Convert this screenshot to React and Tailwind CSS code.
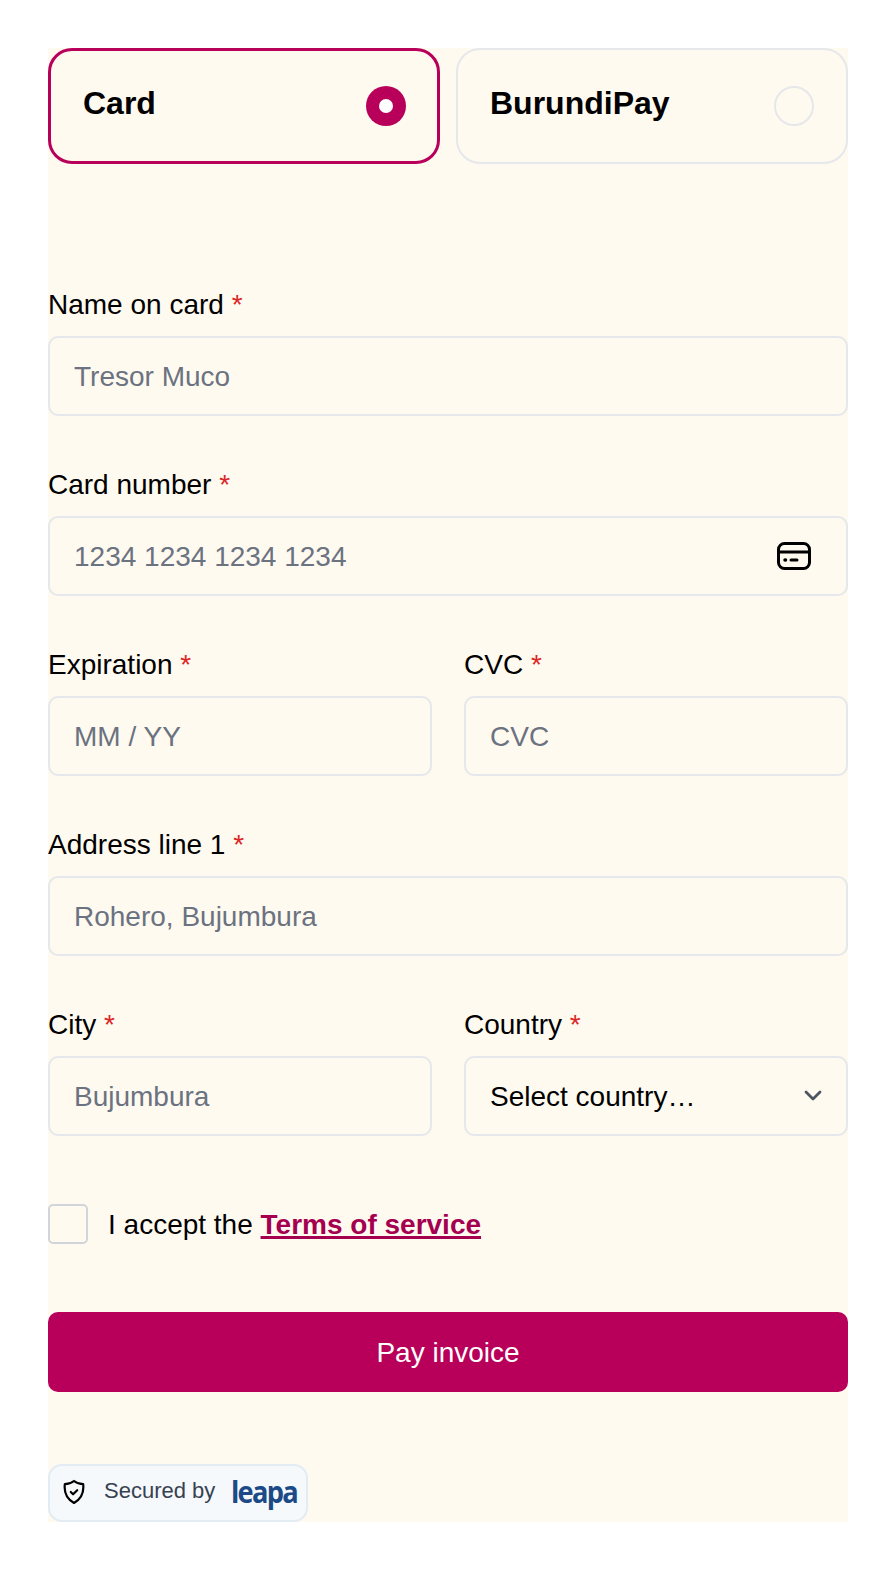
import React from 'react';

const Field = ({ label, placeholder, children }) => (
  <div className="flex flex-col min-w-0">
    <label className="text-[28px] leading-[32px] text-black mb-[15px]">
      {label} <span className="text-[#dc2626]">*</span>
    </label>
    {children || (
      <input
        placeholder={placeholder}
        className="w-full h-[80px] px-[24px] pt-[2px] bg-transparent border-2 border-[#e5e7eb] rounded-[10px] text-[28px] text-black placeholder:text-[#6b7280] outline-none"
      />
    )}
  </div>
);

const PayTab = ({ label, selected }) => (
  <div
    className={
      selected
        ? 'h-[116px] flex justify-between items-center pl-[32px] pr-[31px] border-[3.5px] border-[#b8005a] rounded-[24px]'
        : 'h-[116px] flex justify-between items-center pl-[32px] pr-[32px] border-2 border-[#e5e7eb] rounded-[24px]'
    }
  >
    <span className="text-[32px] font-bold text-black -mt-[7px]">{label}</span>
    {selected ? (
      <span className="w-[40px] h-[40px] rounded-full bg-[#b8005a] flex items-center justify-center">
        <span className="w-[14px] h-[14px] rounded-full bg-white" />
      </span>
    ) : (
      <span className="w-[40px] h-[40px] rounded-full border-2 border-[#e5e7eb]" />
    )}
  </div>
);

const App = () => {
  return (
    <div className="bg-white px-[48px] pt-[48px] pb-[50px] font-['Liberation_Sans',Arial,sans-serif]">
      <div className="bg-[#fffaf0]">
        {/* Payment method */}
        <div className="grid grid-cols-[392px_1fr] gap-[16px]">
          <PayTab label="Card" selected />
          <PayTab label="BurundiPay" />
        </div>

        {/* Form */}
        <div className="flex flex-col gap-[53px] mt-[125px]">
          <Field label="Name on card" placeholder="Tresor Muco" />
          <Field label="Card number">
            <div className="relative">
              <input
                placeholder="1234 1234 1234 1234"
                className="w-full h-[80px] px-[24px] pt-[2px] bg-transparent border-2 border-[#e5e7eb] rounded-[10px] text-[28px] text-black placeholder:text-[#6b7280] outline-none"
              />
              <svg
                className="absolute right-[37px] top-[26px]"
                width="34"
                height="28"
                viewBox="0 0 34 28"
                fill="none"
                stroke="#000"
                strokeWidth="3"
                strokeLinecap="round"
              >
                <rect x="1.5" y="1.500" width="31" height="25" rx="6" />
                <path d="M2 10h30" />
                <path d="M8 18h.5" strokeWidth="3.500" />
                <path d="M14 18h6" />
              </svg>
            </div>
          </Field>
          <div className="grid grid-cols-[384px_1fr] gap-[32px]">
            <Field label="Expiration" placeholder="MM / YY" />
            <Field label="CVC" placeholder="CVC" />
          </div>
          <Field label="Address line 1" placeholder="Rohero, Bujumbura" />
          <div className="grid grid-cols-[384px_1fr] gap-[32px]">
            <Field label="City" placeholder="Bujumbura" />
            <Field label="Country">
              <div className="relative">
                <select className="w-full h-[80px] pl-[24px] pr-[60px] pt-[2px] bg-transparent border-2 border-[#e5e7eb] rounded-[10px] text-[28px] text-black appearance-none outline-none">
                  <option>Select country…</option>
                </select>
                <svg
                  className="absolute right-[26px] top-[33px] pointer-events-none"
                  width="18"
                  height="13"
                  viewBox="0 0 18 13"
                  fill="none"
                  stroke="#4b5563"
                  strokeWidth="2.8"
                  strokeLinecap="round"
                  strokeLinejoin="round"
                >
                  <path d="M2 3l7 7 7-7" />
                </svg>
              </div>
            </Field>
          </div>
        </div>

        {/* Terms */}
        <div className="flex items-center gap-[20px] mt-[68px]">
          <span className="w-[40px] h-[40px] border-2 border-[#d1d5db] rounded-[5px]" />
          <span className="block h-[40px] text-[28px] leading-[42px] text-black">
            I accept the{' '}
            <a className="font-bold text-[#a50050] underline decoration-[2.5px]">Terms of service</a>
          </span>
        </div>

        <button className="block w-full h-[80px] mt-[68px] pt-[2px] bg-[#b8005a] rounded-[10px] text-[28px] text-white">
          Pay invoice
        </button>

        {/* Badge */}
        <div className="flex items-center w-[260px] h-[58px] mt-[72px] pl-[13px] bg-[#f5f9fc] border-2 border-[#e2ecf2] rounded-[14px]">
          <svg
            className="shrink-0 -mt-[2px]"
            width="22"
            height="26"
            viewBox="0 0 24 28"
            fill="none"
            stroke="#000"
            strokeWidth="2.400"
            strokeLinecap="round"
            strokeLinejoin="round"
          >
            <path d="M12 2c3 2.400 6.400 3.500 10 3.500 1 8.500-2 16-10 20.500C4 21.500 1 14 2 5.500 5.600 5.500 9 4.400 12 2z" />
            <path d="M8.500 14l2.500 2.500 4.500-4.500" />
          </svg>
          <span className="ml-[19px] -mt-[6px] text-[22px] text-[#374151] whitespace-nowrap">Secured by</span>
          <span className="ml-[16px] text-[31px] leading-none font-bold text-[#1c4a87] font-['Open_Sans',sans-serif] tracking-[-2px] inline-block scale-x-[0.88] origin-left -mt-[4px]">
            leapa
          </span>
        </div>
      </div>
    </div>
  );
};

export default App;
